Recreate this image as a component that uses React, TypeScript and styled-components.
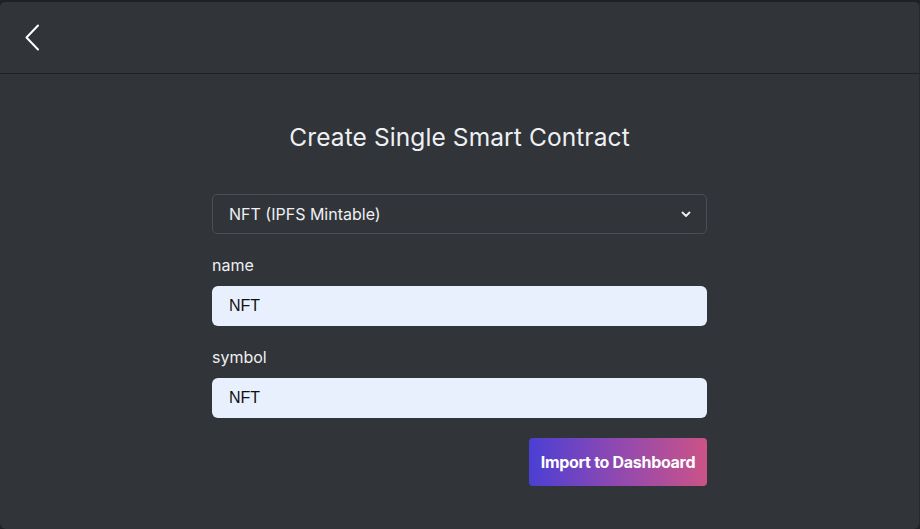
import React, { useState } from 'react';
import styled, { createGlobalStyle } from 'styled-components';

const GlobalStyle = createGlobalStyle`
  html, body {
    margin: 0;
    padding: 0;
    background: #1f2124;
    font-family: Inter, "Noto Sans", sans-serif;
  }
  * { box-sizing: border-box; }
`;

const Modal = styled.div`
  width: 920px;
  height: 529px;
  background: #313439;
  border-top: 2px solid #1f2124;
  border-right: 1px solid #26282c;
  border-radius: 6px;
  display: flex;
  flex-direction: column;
  overflow: hidden;
`;

const Header = styled.header`
  height: 72px;
  display: flex;
  align-items: center;
  padding-left: 22px;
  border-bottom: 1px solid #1f2124;
`;

const BackButton = styled.button`
  background: none;
  border: none;
  padding: 0;
  width: 20px;
  height: 30px;
  display: flex;
  align-items: center;
  justify-content: center;
  cursor: pointer;
`;

const Body = styled.main`
  display: flex;
  flex-direction: column;
  align-items: center;
  padding-top: 48px;
`;

const Title = styled.h1`
  margin: 0 0 42px;
  font-size: 24.5px;
  font-weight: 400;
  color: #eef0f3;
  letter-spacing: 0.1px;
`;

const Form = styled.form`
  width: 495px;
  display: flex;
  flex-direction: column;
`;

const SelectBox = styled.div`
  height: 40px;
  border: 1px solid #4b4e54;
  border-radius: 5px;
  display: flex;
  align-items: center;
  justify-content: space-between;
  padding: 0 14px 0 16px;
  color: #eef0f3;
  font-size: 16px;
  margin-bottom: 21px;
`;

const Label = styled.label`
  color: #eef0f3;
  font-size: 16px;
  line-height: 20px;
  margin-bottom: 11px;
`;

const Input = styled.input`
  height: 40px;
  border: none;
  border-radius: 6px;
  background: #e8f0fe;
  color: #111;
  font-family: "Liberation Sans", Arial, sans-serif;
  font-size: 16px;
  padding: 0 17px;
  margin-bottom: ${(p: { $gap: number }) => p.$gap}px;
  outline: none;
`;

const Actions = styled.div`
  display: flex;
  justify-content: flex-end;
`;

const ImportButton = styled.button`
  width: 178px;
  height: 48px;
  border: none;
  border-radius: 4px;
  background: linear-gradient(90deg, #4b3fd4 0%, #9049b0 50%, #cb5387 100%);
  color: #fff;
  font-family: Inter, sans-serif;
  font-weight: 700;
  font-size: 16px;
  letter-spacing: -0.3px;
  cursor: pointer;
`;

export default function App(): JSX.Element {
  const [name, setName] = useState('NFT');
  const [symbol, setSymbol] = useState('NFT');

  return (
    <>
      <GlobalStyle />
      <Modal>
        <Header>
          <BackButton aria-label="back">
            <svg width="16" height="27" viewBox="0 0 16 27" fill="none">
              <path
                d="M14 1.5 L2.5 13.5 L14 25.5"
                stroke="#fff"
                strokeWidth="2"
                strokeLinecap="round"
                strokeLinejoin="round"
              />
            </svg>
          </BackButton>
        </Header>
        <Body>
          <Title>Create Single Smart Contract</Title>
          <Form onSubmit={(e) => e.preventDefault()}>
            <SelectBox>
              <span>NFT (IPFS Mintable)</span>
              <svg width="12" height="12" viewBox="0 0 12 12" fill="none">
                <path
                  d="M2.5 4.5 L6 8 L9.5 4.5"
                  stroke="#eef0f3"
                  strokeWidth="1.8"
                  strokeLinecap="round"
                  strokeLinejoin="round"
                />
              </svg>
            </SelectBox>
            <Label>name</Label>
            <Input
              $gap={21}
              value={name}
              onChange={(e) => setName(e.target.value)}
            />
            <Label>symbol</Label>
            <Input
              $gap={20}
              value={symbol}
              onChange={(e) => setSymbol(e.target.value)}
            />
            <Actions>
              <ImportButton type="submit">Import to Dashboard</ImportButton>
            </Actions>
          </Form>
        </Body>
      </Modal>
    </>
  );
}
